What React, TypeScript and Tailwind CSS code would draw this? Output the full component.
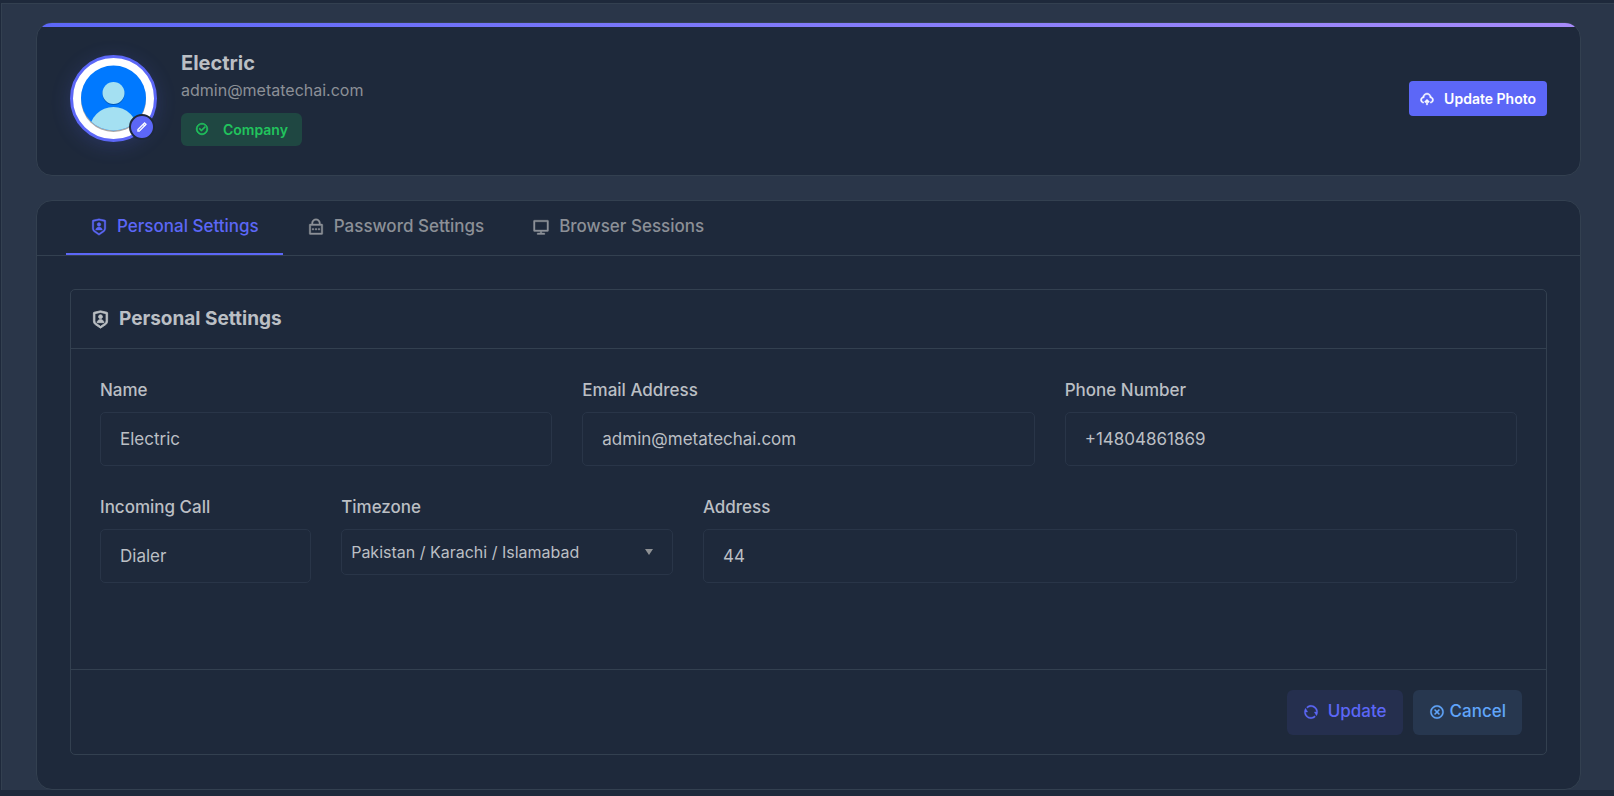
import { useState } from "react";
import type { InputHTMLAttributes } from "react";
import clsx from "clsx";
import type { IconType } from "react-icons";
import {
  RiCheckboxCircleLine,
  RiCloseCircleLine,
  RiComputerLine,
  RiLockPasswordLine,
  RiPencilLine,
  RiRefreshLine,
  RiShieldUserLine,
  RiUploadCloud2Line,
} from "react-icons/ri";

type Tab = { id: string; label: string; icon: IconType };

const tabs: Tab[] = [
  { id: "personal", label: "Personal Settings", icon: RiShieldUserLine },
  { id: "password", label: "Password Settings", icon: RiLockPasswordLine },
  { id: "sessions", label: "Browser Sessions", icon: RiComputerLine },
];

function Field({
  id,
  label,
  className,
  ...rest
}: { id: string; label: string } & InputHTMLAttributes<HTMLInputElement>) {
  return (
    <div className={className}>
      <label htmlFor={id} className="mb-[10px] block text-[17px] leading-6 font-medium">
        {label}
      </label>
      <input
        id={id}
        className="h-[54px] w-full rounded-[5px] border border-[#293548] bg-transparent px-[19px] text-[17px] outline-none focus:border-[#5c67f7]"
        {...rest}
      />
    </div>
  );
}

function Avatar() {
  return (
    <div className="relative size-[87px] shrink-0">
      <div className="size-full rounded-full border-[3px] border-[#5c67f7] bg-white p-[7px] shadow-[0_4px_20px_rgba(92,103,247,0.2)]">
        <svg viewBox="0 0 67 67" className="size-full" aria-hidden="true">
          <defs>
            <clipPath id="avatar-disc">
              <circle cx="33.5" cy="33" r="32.5" />
            </clipPath>
          </defs>
          <circle cx="33.5" cy="34.5" r="32.5" fill="#a8a8a8" />
          <g clipPath="url(#avatar-disc)">
            <rect width="67" height="67" fill="#0079ff" />
            <circle cx="33.5" cy="29" r="11" fill="#0057b8" />
            <circle cx="33.5" cy="28" r="11" fill="#a4e0f2" />
            <circle cx="33.5" cy="66" r="24" fill="#a4e0f2" />
          </g>
        </svg>
      </div>
      <button
        type="button"
        aria-label="Edit photo"
        className="absolute right-[2px] bottom-[2px] flex size-[26px] items-center justify-center rounded-full border-2 border-[#1e293b] bg-[#5c67f7] text-white"
      >
        <RiPencilLine className="size-3 stroke-current stroke-1" />
      </button>
    </div>
  );
}

export default function App() {
  const [active, setActive] = useState("personal");

  return (
    <div className="min-h-screen bg-[#1e293b] pt-[3px] pl-px font-['Inter',sans-serif] text-[#bbbfc4]">
      <main className="flex flex-col gap-6 border-t border-l border-[#334050] bg-[#2a3649] pt-[18px] pr-[33px] pl-[34px]">
        <section className="relative flex h-[154px] items-center justify-between overflow-hidden rounded-2xl border border-[#334050] bg-[#1e293b] px-[33px] pb-px">
          <div className="absolute inset-x-0 top-0 h-1 bg-linear-to-r from-[#5c67f7] to-[#a78bfa]" />
          <div className="flex items-center gap-6">
            <Avatar />
            <div className="flex flex-col items-start pb-[3px]">
              <h1 className="text-[20px] leading-7 font-bold">Electric</h1>
              <p className="text-[16px] leading-[26px] text-[#8c9097]">admin@metatechai.com</p>
              <span className="mt-[10px] flex h-[33px] items-center gap-[14px] rounded-md bg-[#1f4742] px-[14px] text-[14px] font-semibold text-[#21c45d]">
                <RiCheckboxCircleLine className="size-[14px] stroke-current stroke-1" />
                Company
              </span>
            </div>
          </div>
          <button
            type="button"
            className="flex h-[35px] items-center gap-[10px] rounded bg-[#5c67f7] px-[11px] text-[14px] font-semibold text-white"
          >
            <RiUploadCloud2Line className="size-[14px] stroke-current stroke-1" />
            Update Photo
          </button>
        </section>

        <section className="rounded-2xl border border-[#334050] bg-[#1e293b]">
          <div role="tablist" className="flex border-b border-[#334050] px-[29px]">
            {tabs.map(({ id, label, icon: Icon }) => (
              <button
                key={id}
                type="button"
                role="tab"
                aria-selected={active === id}
                onClick={() => setActive(id)}
                className={clsx(
                  "flex h-[54px] items-center gap-[9px] border-b-2 px-6 text-[17px] font-medium",
                  active === id
                    ? "border-[#5c67f7] text-[#5c67f7]"
                    : "border-transparent text-[#8c9097]"
                )}
              >
                <Icon className="size-[18px] stroke-current stroke-[0.5]" />
                {label}
              </button>
            ))}
          </div>

          <div className="px-[33px] pt-[33px] pb-[34px]">
            <form
              className="rounded-[5px] border border-[#334050]"
              onSubmit={(e) => e.preventDefault()}
            >
              <h2 className="flex h-[59px] items-center gap-[9px] border-b border-[#334050] px-5 text-[19px] font-bold">
                <RiShieldUserLine className="size-[19px] stroke-current stroke-1" />
                Personal Settings
              </h2>

              <div className="grid h-[320px] grid-cols-12 content-start gap-x-[30px] gap-y-[29px] px-[29px] pt-[29px]">
                <Field className="col-span-4" id="name" label="Name" defaultValue="Electric" />
                <Field
                  className="col-span-4"
                  id="email"
                  label="Email Address"
                  type="email"
                  defaultValue="admin@metatechai.com"
                />
                <Field
                  className="col-span-4"
                  id="phone"
                  label="Phone Number"
                  type="tel"
                  defaultValue="+14804861869"
                />
                <Field
                  className="col-span-2"
                  id="incoming"
                  label="Incoming Call"
                  defaultValue="Dialer"
                />
                <div className="col-span-3">
                  <label
                    htmlFor="timezone"
                    className="mb-[10px] block text-[17px] leading-6 font-medium"
                  >
                    Timezone
                  </label>
                  <div className="relative">
                    <select
                      id="timezone"
                      defaultValue="Asia/Karachi"
                      className="h-[46px] w-full appearance-none rounded-[5px] border border-[#293548] bg-transparent pr-10 pl-[9px] text-[16px] outline-none focus:border-[#5c67f7]"
                    >
                      <option value="Asia/Karachi">Pakistan / Karachi / Islamabad</option>
                    </select>
                    <span className="pointer-events-none absolute inset-y-0 right-5 flex items-center">
                      <svg viewBox="0 0 8 6" className="h-[6px] w-2" fill="#8f9194" aria-hidden="true">
                        <path d="M0 0h8L4 6z" />
                      </svg>
                    </span>
                  </div>
                </div>
                <Field className="col-span-7" id="address" label="Address" defaultValue="44" />
              </div>

              <div className="flex h-[85px] items-center justify-end gap-[10px] border-t border-[#334050] px-6">
                <button
                  type="submit"
                  className="flex h-[45px] items-center gap-[9px] rounded-md bg-[#252f4e] px-4 text-[17px] font-medium text-[#5c67f7]"
                >
                  <RiRefreshLine className="size-4 stroke-current stroke-[0.5]" />
                  Update
                </button>
                <button
                  type="button"
                  className="flex h-[45px] items-center gap-[5px] rounded-md bg-[#27374f] px-4 text-[17px] font-medium text-[#60a5fa]"
                >
                  <RiCloseCircleLine className="size-4 stroke-current stroke-[0.5]" />
                  Cancel
                </button>
              </div>
            </form>
          </div>
        </section>
      </main>
    </div>
  );
}
